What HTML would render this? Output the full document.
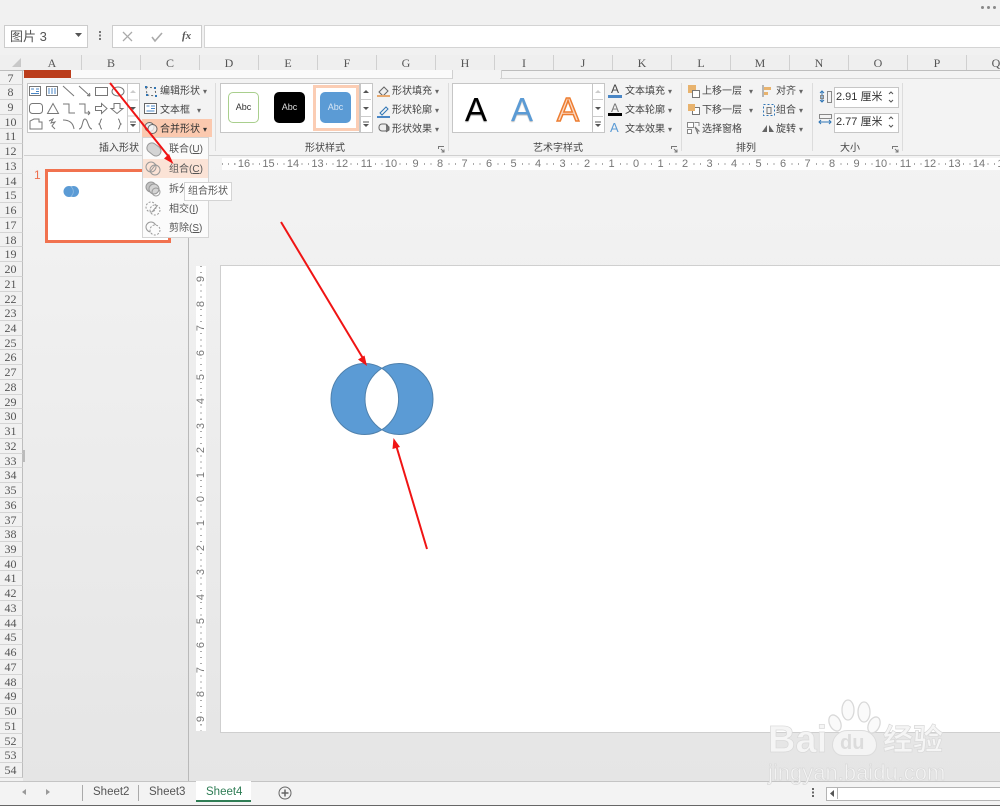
<!DOCTYPE html>
<html lang="zh"><head><meta charset="utf-8"><title>图片 3</title>
<style>
html,body{margin:0;padding:0}
body{width:1000px;height:806px;overflow:hidden;position:relative;background:#f1f1f1;font-family:"Liberation Sans","Noto Sans CJK SC",sans-serif;color:#444}
.a,.t,.c,.r span,.v span{position:absolute}
.a{display:block}
.t{font-size:10px;line-height:12px;white-space:nowrap;color:#444}
.t i{font-style:normal;color:#666;font-size:8px;position:absolute;left:100%;margin-left:3px;top:0}
.c{top:55px;width:59px;height:15px;text-align:center;font:12px/17px "Liberation Serif",serif;color:#555;border-right:1px solid #d0d0d0;box-sizing:border-box}
#rows{position:absolute;left:0;top:70.5px;width:23px}
#rows div{height:14.74px;box-sizing:border-box;border-bottom:1px solid #d4d4d4;border-right:1px solid #bdbdbd;font:12px/15px "Liberation Serif",serif;color:#555;text-align:center;padding-right:1px}
.r span{font-size:11px;line-height:12px;color:#777;top:0;width:14px;text-align:center;background:#fff}
.v span{font-size:11px;line-height:10px;color:#777;left:0;width:10px;height:10px;text-align:center;transform:rotate(-90deg);background:#fff}
svg{position:absolute;overflow:visible}
.wm{position:absolute;color:#f5f5f5;-webkit-text-stroke:.7px #d9d9d9}
</style></head><body>

<!-- Top bars -->
<div class="a" style="left:981px;top:6px;width:3px;height:3px;background:#888;border-radius:2px;box-shadow:6px 0 0 #888,12px 0 0 #888"></div>
<div class="a" style="left:4px;top:25px;width:82px;height:21px;background:#fff;border:1px solid #ccc"></div>
<div class="t" style="left:10px;top:29px;font-size:13px;line-height:15px;color:#555">图片 3</div>
<svg style="left:75px;top:33px" width="8" height="5"><path d="M0 0h7L3.500 4z" fill="#555"/></svg>
<div class="a" style="left:99px;top:31px;width:2px;height:2px;background:#777;box-shadow:0 3.500px 0 #777,0 7px 0 #777"></div>
<div class="a" style="left:112px;top:25px;width:88px;height:21px;background:#fff;border:1px solid #ccc"></div>
<svg style="left:122px;top:31px" width="70" height="12"><path d="M1 1l9 9M10 1l-9 9" stroke="#aaa" stroke-width="1.300" fill="none"/><path d="M30 6l3 4 7-8" stroke="#aaa" stroke-width="1.600" fill="none"/></svg>
<div class="t" style="left:182px;top:29px;font:italic bold 11px/14px 'Liberation Serif',serif;color:#555">fx</div>
<div class="a" style="left:204px;top:25px;width:800px;height:21px;background:#fff;border:1px solid #d4d4d4"></div>

<!-- Column headers -->
<div class="a" style="left:0;top:55px;width:1000px;height:15px;background:#efefef;border-bottom:1px solid #bdbdbd"></div>
<svg style="left:12px;top:58px" width="10" height="10"><path d="M9 0v9H0z" fill="#c8c8c8"/></svg>
<div class="c" style="left:23px">A</div><div class="c" style="left:82px">B</div><div class="c" style="left:141px">C</div><div class="c" style="left:200px">D</div><div class="c" style="left:259px">E</div><div class="c" style="left:318px">F</div><div class="c" style="left:377px">G</div><div class="c" style="left:436px">H</div><div class="c" style="left:495px">I</div><div class="c" style="left:554px">J</div><div class="c" style="left:613px">K</div><div class="c" style="left:672px">L</div><div class="c" style="left:731px">M</div><div class="c" style="left:790px">N</div><div class="c" style="left:849px">O</div><div class="c" style="left:908px">P</div><div class="c" style="left:967px">Q</div>

<!-- Row headers -->
<div id="rows"><div>7</div><div>8</div><div>9</div><div>10</div><div>11</div><div>12</div><div>13</div><div>14</div><div>15</div><div>16</div><div>17</div><div>18</div><div>19</div><div>20</div><div>21</div><div>22</div><div>23</div><div>24</div><div>25</div><div>26</div><div>27</div><div>28</div><div>29</div><div>30</div><div>31</div><div>32</div><div>33</div><div>34</div><div>35</div><div>36</div><div>37</div><div>38</div><div>39</div><div>40</div><div>41</div><div>42</div><div>43</div><div>44</div><div>45</div><div>46</div><div>47</div><div>48</div><div>49</div><div>50</div><div>51</div><div>52</div><div>53</div><div>54</div></div>

<!-- Ribbon -->
<div class="a" style="left:24px;top:71px;width:976px;height:84px;background:#f3f3f3;border-bottom:1px solid #d0d0d0"></div>
<div class="a" style="left:24px;top:70px;width:47px;height:8px;background:#bb3d1c"></div>
<div class="a" style="left:71px;top:70px;width:381px;height:8px;background:#fafafa;border-bottom:1px solid #d4d4d4"></div>
<div class="a" style="left:452px;top:70px;width:48px;height:9px;background:#f3f3f3;border:1px solid #d0d0d0;border-top:0;border-bottom:0"></div>
<div class="a" style="left:500px;top:78px;width:500px;height:1px;background:#d4d4d4"></div>
<!-- Clipped tab labels -->
<div class="a" style="left:24px;top:70px;width:476px;height:3px;overflow:hidden">
<div class="t" style="left:13px;top:-10px;color:#fff">文件</div>
<div class="t" style="left:61px;top:-10px;color:#666">开始</div>
<div class="t" style="left:104px;top:-10px;color:#666">插入</div>
<div class="t" style="left:148px;top:-10px;color:#666">设计</div>
<div class="t" style="left:191px;top:-10px;color:#666">切换</div>
<div class="t" style="left:238px;top:-10px;color:#666">动画</div>
<div class="t" style="left:279px;top:-10px;color:#666">幻灯片放映</div>
<div class="t" style="left:353px;top:-10px;color:#666">审阅</div>
<div class="t" style="left:394px;top:-10px;color:#666">视图</div>
<div class="t" style="left:443px;top:-10px;color:#d2601a">格式</div>
</div>

<!-- Shape gallery -->
<div class="a" style="left:27px;top:83px;width:111px;height:48px;background:#fff;border:1px solid #c6c6c6"></div>
<div class="a" style="left:127px;top:84px;width:11px;height:48px;background:#fff;border-left:1px solid #ccc"></div>
<svg style="left:28px;top:84px" width="112" height="48" fill="none" stroke="#777" stroke-width="1">
<rect x="1.500" y="2.500" width="11" height="9"/><path d="M3 5h3M8 5h3M8 7.500h3M3 9.500h8" stroke="#4a86c5"/>
<rect x="18.500" y="2.500" width="11" height="9"/><path d="M21 4v6M24 4v6M27 4v6" stroke="#4a86c5"/>
<path d="M35 2l11 10M51 2l11 10"/><path d="M62 12l-3-.5M62 12l-.5-3"/>
<rect x="67.500" y="3.500" width="12" height="8"/><ellipse cx="90" cy="7.500" rx="6" ry="4.500"/>
<rect x="1.500" y="19.500" width="13" height="10" rx="3"/><path d="M19.500 29.500l5.500-10 5.500 10z"/>
<path d="M35 20h6v9h6M51 20h6v9h5M62 29l-2-2M62 29l-2 2"/><path d="M67.500 22.500h6v-3l5.500 5-5.500 5v-3h-6z"/><path d="M86 19.500h6v5h3l-6 5-6-5h3z"/>
<path d="M2 45V37l4-2h5v3h3v7z"/><path d="M21 37l4-2-2 4 4-1-3 4 3 3"/><path d="M35 36c5 0 10 2 11 9"/><path d="M51 45c4 0 3-10 6-10s3 10 7 10"/>
<path d="M74 35c-2 0-1 4-3 5 2 1 1 5 3 5M90 35c2 0 1 4 3 5-2 1-1 5-3 5"/>
</svg>
<svg style="left:128px;top:85px" width="10" height="46"><path d="M2 8l3-3 3 3z" fill="#ccc"/><path d="M0 15h10M0 31h10" stroke="#ccc"/><path d="M2 22l3 3 3-3z" fill="#555"/><path d="M2 37h6" stroke="#555"/><path d="M2 39l3 3 3-3z" fill="#555"/></svg>

<!-- Edit shape column -->
<svg style="left:144px;top:84px" width="14" height="14" fill="none"><path d="M2 3l9 1 1 8-9-1z" stroke="#666" stroke-dasharray="2 2"/><path d="M1 2h2v2H1zM10 3h2v2h-2zM2 10h2v2H2zM11 11h2v2h-2z" fill="#2f75b5"/></svg>
<div class="t" style="left:160px;top:86px">编辑形状<i>▾</i></div>
<svg style="left:144px;top:102px" width="14" height="14" fill="#fff"><rect x=".5" y="1.500" width="12" height="10" stroke="#666"/><path d="M2.500 4h3M7 4h4M7 6.500h4M2.500 9h8" stroke="#4a86c5" fill="none"/></svg>
<div class="t" style="left:160px;top:105px">文本框</div><div class="t" style="left:197px;top:105px;font-size:8px;color:#666">▾</div>
<div class="a" style="left:142px;top:119px;width:70px;height:18px;background:#fbc9af"></div>
<svg style="left:144px;top:121px" width="14" height="14" fill="none" stroke="#666"><circle cx="5.500" cy="6" r="4.500" fill="#e8e8e8"/><circle cx="8.500" cy="8" r="4.500" fill="#f4f4f4" fill-opacity=".8"/></svg>
<div class="t" style="left:160px;top:124px;color:#333">合并形状<i style="color:#333">▾</i></div>
<div class="t" style="left:99px;top:143px;color:#444">插入形状</div>
<div class="a" style="left:215px;top:83px;width:1px;height:68px;background:#dcdcdc"></div>

<!-- Shape styles -->
<div class="a" style="left:220px;top:83px;width:138px;height:48px;background:#fff;border:1px solid #c6c6c6"></div>
<div class="a" style="left:228px;top:92px;width:29px;height:29px;background:#fff;border:1px solid #a9cf8d;border-radius:5px;font-size:9px;line-height:29px;text-align:center;color:#333">Abc</div>
<div class="a" style="left:274px;top:92px;width:31px;height:31px;background:#000;border-radius:5px;font-size:9px;line-height:30px;text-align:center;color:#ddd">Abc</div>
<div class="a" style="left:313px;top:85px;width:46px;height:46px;box-sizing:border-box;background:#fff;border:3px solid #fbcdb4"></div>
<div class="a" style="left:320px;top:92px;width:31px;height:31px;background:#5b9bd5;border-radius:5px;font-size:9px;line-height:30px;text-align:center;color:#d8e6f5">Abc</div>
<div class="a" style="left:360px;top:83px;width:11px;height:48px;background:#fff;border:1px solid #c6c6c6"></div>
<svg style="left:361px;top:84px" width="10" height="48"><path d="M2 9l3-3 3 3z" fill="#555"/><path d="M0 15.500h10M0 32.500h10" stroke="#ccc"/><path d="M2 23l3 3 3-3z" fill="#555"/><path d="M2 38h6" stroke="#555"/><path d="M2 40l3 3 3-3z" fill="#555"/></svg>
<svg style="left:377px;top:83px" width="15" height="50" fill="none" stroke="#666"><path d="M2 9l5-5 4 4-5 5z" fill="#eee"/><path d="M0 13h13" stroke="#e7a96f" stroke-width="2"/><path d="M3 30l6-6 2 2-6 6z" stroke="#2f75b5"/><path d="M0 34h13" stroke="#4a86c5" stroke-width="2"/><rect x="2" y="41" width="9" height="7" rx="3" fill="#eee"/><path d="M9 42l3 2v3l-3 2" fill="#777"/></svg>
<div class="t" style="left:392px;top:86px">形状填充<i>▾</i></div>
<div class="t" style="left:392px;top:105px">形状轮廓<i>▾</i></div>
<div class="t" style="left:392px;top:124px">形状效果<i>▾</i></div>
<div class="t" style="left:305px;top:143px">形状样式</div>
<svg style="left:438px;top:146px" width="7" height="7" fill="none" stroke="#777"><path d="M.5 3V.5H6M6 6L3 3M6 3.500V6H3.500"/></svg>
<div class="a" style="left:448px;top:83px;width:1px;height:68px;background:#dcdcdc"></div>

<!-- WordArt -->
<div class="a" style="left:452px;top:83px;width:140px;height:48px;background:#fff;border:1px solid #c6c6c6"></div>
<div class="a" style="left:463px;top:91px;width:26px;font-size:33px;line-height:38px;text-align:center;color:#000;text-shadow:0 1px 1px #999">A</div>
<div class="a" style="left:509px;top:91px;width:26px;font-size:33px;line-height:38px;text-align:center;color:#5b9bd5;text-shadow:0 1px 1px #bbb">A</div>
<div class="a" style="left:555px;top:91px;width:26px;font-size:33px;line-height:38px;text-align:center;color:#fbd9c4;-webkit-text-stroke:1.500px #ed7d31">A</div>
<div class="a" style="left:592px;top:83px;width:11px;height:48px;background:#fff;border:1px solid #c6c6c6"></div>
<svg style="left:593px;top:84px" width="10" height="48"><path d="M2 9l3-3 3 3z" fill="#ccc"/><path d="M0 15.500h10M0 32.500h10" stroke="#ccc"/><path d="M2 23l3 3 3-3z" fill="#555"/><path d="M2 38h6" stroke="#555"/><path d="M2 40l3 3 3-3z" fill="#555"/></svg>
<div class="t" style="left:611px;top:83px;font-size:12px;color:#444">A</div><div class="a" style="left:608px;top:95px;width:14px;height:3px;background:#4a86c5"></div>
<div class="t" style="left:611px;top:102px;font-size:12px;color:#777">A</div><div class="a" style="left:608px;top:113px;width:14px;height:3px;background:#000"></div>
<div class="t" style="left:610px;top:122px;font-size:13px;color:#5b9bd5">A</div>
<div class="t" style="left:625px;top:86px">文本填充<i>▾</i></div>
<div class="t" style="left:625px;top:105px">文本轮廓<i>▾</i></div>
<div class="t" style="left:625px;top:124px">文本效果<i>▾</i></div>
<div class="t" style="left:533px;top:143px">艺术字样式</div>
<svg style="left:671px;top:146px" width="7" height="7" fill="none" stroke="#777"><path d="M.5 3V.5H6M6 6L3 3M6 3.500V6H3.500"/></svg>
<div class="a" style="left:681px;top:83px;width:1px;height:68px;background:#dcdcdc"></div>

<!-- Arrange -->
<svg style="left:686px;top:84px" width="16" height="50"><rect x="2" y="1" width="8" height="8" fill="#e8b36e"/><rect x="6.500" y="6.500" width="7" height="7" fill="#fff" stroke="#777"/><rect x="6.500" y="23.500" width="7" height="7" fill="#fff" stroke="#777"/><rect x="2" y="20" width="7" height="7" fill="#e8b36e"/><path d="M1.500 38.500h6v5h-6zM1.500 45.500h4v4h-4zM9 39v-.5h4V42" fill="#fff" stroke="#888"/><path d="M9 43l4 4-2 0 1 3z" fill="#fff" stroke="#777"/></svg>
<div class="t" style="left:702px;top:86px">上移一层</div><div class="t" style="left:749px;top:86px;font-size:8px;color:#666">▾</div>
<div class="t" style="left:702px;top:105px">下移一层</div><div class="t" style="left:749px;top:105px;font-size:8px;color:#666">▾</div>
<div class="t" style="left:702px;top:124px">选择窗格</div>
<svg style="left:762px;top:84px" width="15" height="50" fill="none"><path d="M1 1v12" stroke="#777"/><path d="M2 3h7v3H2z" fill="#e8b36e"/><path d="M2 8h4v3H2z" fill="#e8b36e"/><rect x="1.500" y="20.500" width="11" height="11" stroke="#2f75b5" stroke-dasharray="2 2"/><path d="M5 23.500h4v6H5z" stroke="#777"/><path d="M0 48l5-7v7zM7 41l5 7H7z" fill="#666"/></svg>
<div class="t" style="left:776px;top:86px">对齐<i>▾</i></div>
<div class="t" style="left:776px;top:105px">组合<i>▾</i></div>
<div class="t" style="left:776px;top:124px">旋转<i>▾</i></div>
<div class="t" style="left:736px;top:143px">排列</div>
<div class="a" style="left:812px;top:83px;width:1px;height:68px;background:#dcdcdc"></div>

<!-- Size -->
<svg style="left:818px;top:90px" width="15" height="38" fill="none"><path d="M4 1v11" stroke="#2f75b5"/><path d="M2 3l2-2 2 2M2 10l2 2 2-2" stroke="#2f75b5"/><rect x="9.500" y="1.500" width="4" height="11" stroke="#888"/><rect x="2.500" y="5.500" width="3" height="3" stroke="#888"/><rect x="1.500" y="24.500" width="12" height="4" stroke="#888"/><path d="M1 32h12M3 30l-2 2 2 2M11 30l2 2-2 2" stroke="#2f75b5"/></svg>
<div class="a" style="left:834px;top:87px;width:63px;height:19px;background:#fff;border:1px solid #c6c6c6"></div>
<div class="a" style="left:834px;top:113px;width:63px;height:18px;background:#fff;border:1px solid #c6c6c6"></div>
<div class="t" style="left:836px;top:91px;color:#333;font-size:11px">2.91 厘米</div>
<div class="t" style="left:836px;top:116px;color:#333;font-size:11px">2.77 厘米</div>
<svg style="left:888px;top:91px" width="6" height="40"><path d="M1 3l2-2 2 2M1 9l2 2 2-2M1 28l2-2 2 2M1 34l2 2 2-2" stroke="#555" fill="none"/></svg>
<div class="t" style="left:840px;top:143px">大小</div>
<svg style="left:892px;top:146px" width="7" height="7" fill="none" stroke="#777"><path d="M.5 3V.5H6M6 6L3 3M6 3.500V6H3.500"/></svg>
<div class="a" style="left:902px;top:83px;width:1px;height:68px;background:#dcdcdc"></div>

<!-- Workspace -->
<div class="a" style="left:23px;top:156px;width:977px;height:626px;background:linear-gradient(#f3f3f3,#e5e5e5)"></div>
<div class="a" style="left:188px;top:156px;width:1px;height:626px;background:#b9b9b9"></div>
<div class="a" style="left:23px;top:450px;width:2px;height:12px;background:#bbb"></div>

<!-- Thumb -->
<div class="t" style="left:34px;top:168px;font-size:12px;line-height:14px;color:#ef6f4d">1</div>
<div class="a" style="left:45px;top:169px;width:126px;height:74px;box-sizing:border-box;background:#fff;border:3px solid #f1724f"></div>
<svg style="left:63px;top:185px" width="16" height="13"><circle cx="6" cy="6.500" r="5.500" fill="#5b9bd5"/><circle cx="10.500" cy="6.500" r="5.500" fill="#5b9bd5"/><path d="M8.300 2a6 6 0 0 1 0 9" stroke="#8fbbe3" fill="none" stroke-width=".8"/></svg>

<!-- H ruler -->
<div class="a r" style="left:222px;top:158px;width:778px;height:12px;background:#fff;overflow:hidden">
<div class="a" style="left:0;top:5px;width:778px;height:2px;background:repeating-linear-gradient(90deg,#aaa 0 1px,transparent 1px 6.125px)"></div>
<span style="left:15px">16</span><span style="left:39.500px">15</span><span style="left:64px">14</span><span style="left:88.500px">13</span><span style="left:113px">12</span><span style="left:137.500px">11</span><span style="left:162px">10</span><span style="left:186.500px">9</span><span style="left:211px">8</span><span style="left:235.500px">7</span><span style="left:260px">6</span><span style="left:284.500px">5</span><span style="left:309px">4</span><span style="left:333.500px">3</span><span style="left:358px">2</span><span style="left:382.500px">1</span><span style="left:407px">0</span><span style="left:431.500px">1</span><span style="left:456px">2</span><span style="left:480.500px">3</span><span style="left:505px">4</span><span style="left:529.500px">5</span><span style="left:554px">6</span><span style="left:578.500px">7</span><span style="left:603px">8</span><span style="left:627.500px">9</span><span style="left:652px">10</span><span style="left:676.500px">11</span><span style="left:701px">12</span><span style="left:725.500px">13</span><span style="left:750px">14</span><span style="left:774.500px">15</span>
</div>
<!-- V ruler -->
<div class="a v" style="left:196px;top:266px;width:10px;height:465px;background:#fff">
<div class="a" style="left:4px;top:0;width:2px;height:465px;background:repeating-linear-gradient(180deg,#aaa 0 1px,transparent 1px 6.110px)"></div>
<span style="top:8px">9</span><span style="top:33px">8</span><span style="top:57px">7</span><span style="top:82px">6</span><span style="top:106px">5</span><span style="top:130px">4</span><span style="top:155px">3</span><span style="top:179px">2</span><span style="top:204px">1</span><span style="top:228px">0</span><span style="top:252px">1</span><span style="top:277px">2</span><span style="top:301px">3</span><span style="top:326px">4</span><span style="top:350px">5</span><span style="top:374px">6</span><span style="top:399px">7</span><span style="top:423px">8</span><span style="top:448px">9</span>
</div>
<!-- Slide -->
<div class="a" style="left:220px;top:265px;width:790px;height:468px;background:#fff;border:1px solid #cfcfcf;box-sizing:border-box"></div>

<!-- Venn shape -->
<svg style="left:0;top:0" width="1000" height="806">
<path fill-rule="evenodd" fill="#5b9bd5" stroke="#4f81ad" stroke-width="1" d="M331 399a33.800 35.500 0 1 0 67.600 0a33.800 35.500 0 1 0-67.600 0zM365 399a34 35.500 0 1 0 68 0a34 35.500 0 1 0-68 0z"/>
<g stroke="#f01414" stroke-width="2" fill="#f01414">
<path d="M281 222L364 360" fill="none"/><path d="M367 366l-9-6.500 6.500-4z" stroke="none"/>
<path d="M427 549L396 445" fill="none"/><path d="M393.500 438l6.500 9-7.500 2z" stroke="none"/>
</g>
</svg>

<!-- Merge menu -->
<div class="a" style="left:142px;top:137px;width:67px;height:101px;box-sizing:border-box;background:#fbfbfb;border:1px solid #d4d4d4"></div>
<div class="a" style="left:143px;top:159px;width:65px;height:19px;background:#fbe3d6"></div>
<svg style="left:145px;top:142px" width="18" height="95" fill="none" stroke="#999">
<path d="M6 1a5 5 0 0 0-3 8l5 4a5 5 0 0 0 6-8l-4-3a5 5 0 0 0-4-1z" fill="#d4d4d4"/>
<circle cx="6" cy="25" r="5"/><circle cx="10" cy="28" r="5"/><path d="M5 30l6-8"/>
<circle cx="6" cy="45" r="5" fill="#c4c4c4"/><circle cx="9" cy="47" r="5" fill="#d4d4d4"/><circle cx="11" cy="50" r="4"/>
<circle cx="6" cy="65" r="5" stroke-dasharray="2 1.500"/><circle cx="10" cy="68" r="5" stroke-dasharray="2 1.500"/><path d="M7 70l5-6"/>
<circle cx="6" cy="85" r="5"/><circle cx="10" cy="88" r="5" stroke-dasharray="2 1.500" fill="#fbfbfb"/>
</svg>
<div class="t" style="left:169px;top:144px;color:#555">联合(<u>U</u>)</div>
<div class="t" style="left:169px;top:164px;color:#555">组合(<u>C</u>)</div>
<div class="t" style="left:169px;top:184px;color:#555">拆分</div>
<div class="t" style="left:169px;top:204px;color:#555">相交(<u>I</u>)</div>
<div class="t" style="left:169px;top:223px;color:#555">剪除(<u>S</u>)</div>
<div class="a" style="left:184px;top:182px;width:48px;height:19px;box-sizing:border-box;background:#fff;border:1px solid #d4d4d4;font-size:10px;line-height:17px;text-align:center;color:#555">组合形状</div>
<svg style="left:0;top:0" width="1000" height="806"><g stroke="#f01414" stroke-width="2" fill="#f01414"><path d="M110 83L169 157" fill="none"/><path d="M173.500 164l-9.500-5.500 5-4.500z" stroke="none"/></g></svg>

<!-- Bottom bar -->
<div class="a" style="left:0;top:781px;width:1000px;height:25px;background:#f3f3f3;border-top:1px solid #c4c4c4;box-sizing:border-box"></div>
<div class="a" style="left:0;top:804.500px;width:1000px;height:1.500px;background:#666"></div>
<svg style="left:21px;top:788px" width="30" height="9" fill="#999"><path d="M5 1v6L1 4zM25 1v6l4-3z"/></svg>
<div class="a" style="left:82px;top:785px;width:1px;height:16px;background:#aaa"></div>
<div class="t" style="left:93px;top:785px;font-size:11.500px;line-height:15px;color:#555">Sheet2</div>
<div class="a" style="left:138px;top:785px;width:1px;height:16px;background:#aaa"></div>
<div class="t" style="left:149px;top:785px;font-size:11.500px;line-height:15px;color:#555">Sheet3</div>
<div class="a" style="left:196px;top:781px;width:55px;height:21px;box-sizing:border-box;background:#fff;border-bottom:2px solid #2f7d55"></div>
<div class="t" style="left:206px;top:785px;font-size:11.500px;line-height:15px;color:#2f7d55">Sheet4</div>
<svg style="left:278px;top:786px" width="14" height="14" fill="none" stroke="#666"><circle cx="7" cy="7" r="6"/><path d="M3.500 7h7M7 3.500v7" stroke-width="1.500"/></svg>
<div class="a" style="left:812px;top:788px;width:2px;height:2px;background:#666;box-shadow:0 3.500px 0 #666,0 7px 0 #666"></div>
<div class="a" style="left:826px;top:787px;width:180px;height:12px;box-sizing:content-box;background:#fff;border:1px solid #b4b4b4"></div>
<div class="a" style="left:837px;top:787px;width:1px;height:12px;background:#b4b4b4"></div>
<svg style="left:829px;top:790px" width="6" height="7"><path d="M5 0v7L1 3.500z" fill="#555"/></svg>

<!-- Watermark -->
<svg style="left:826px;top:698px" width="60" height="50" fill="#fafafa" stroke="#d9d9d9" stroke-width="1.300">
<ellipse cx="9" cy="25" rx="5.500" ry="8.500" transform="rotate(-25 9 25)"/><ellipse cx="22" cy="12" rx="6" ry="10"/><ellipse cx="38" cy="14" rx="6" ry="10"/><ellipse cx="48" cy="27" rx="5.500" ry="8.500" transform="rotate(25 48 27)"/>
</svg>
<div class="wm" style="left:768px;top:718px;font:bold 38px/44px 'Liberation Sans',sans-serif">Bai</div>
<div class="a" style="left:832px;top:730px;width:45px;height:26px;box-sizing:border-box;border-radius:20px 20px 14px 14px;background:#f4f4f4;border:1px solid #dcdcdc"></div>
<div class="a" style="left:840px;top:731px;font:bold 20px/24px 'Liberation Sans',sans-serif;color:#dcdcdc">du</div>
<div class="wm" style="left:883px;top:723px;font:bold 30px/36px 'Liberation Sans','Noto Sans CJK SC',sans-serif">经验</div>
<div class="wm" style="left:768px;top:760px;font:22px/26px 'Liberation Sans',sans-serif">jingyan.baidu.com</div>
</body></html>
